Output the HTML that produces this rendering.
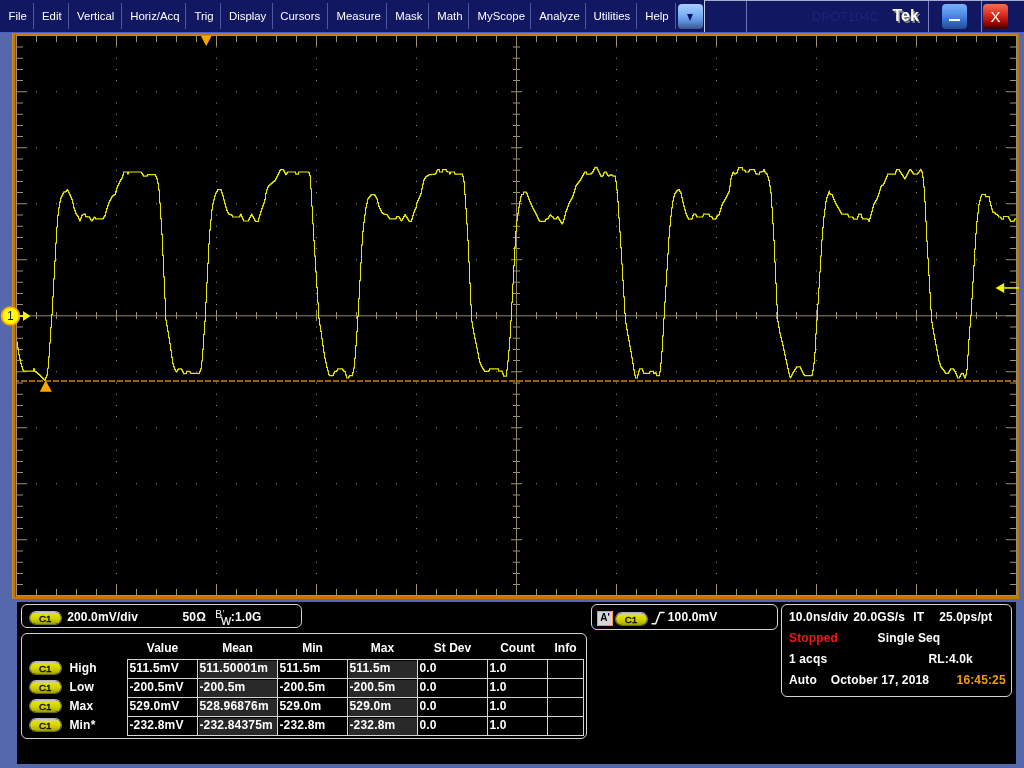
<!DOCTYPE html>
<html lang="en">
<head>
<meta charset="utf-8">
<title>Tek DPO7104C</title>
<style>
html,body{margin:0;padding:0}
body{width:1024px;height:768px;overflow:hidden;position:relative;background:#5568ab;
 font-family:"Liberation Sans",Arial,sans-serif;font-size:12px;color:#fff}
.scope{position:absolute;left:0;top:0}
#menubar{will-change:transform;position:absolute;left:0;top:0;width:1024px;height:32px;background:#111761;border-bottom:1px solid #4562c4}
.mi{position:absolute;top:9px;height:15px;line-height:15px;font-size:11.4px;white-space:nowrap;color:#fff;text-align:center}
.sep{position:absolute;top:3px;width:1px;height:26px;background:#4c5aa0}
#more{position:absolute;left:678px;top:4px;width:25px;height:25px;border-radius:4px;
 background:linear-gradient(#a8cdff 0%,#7db2f6 42%,#5d8edb 70%,#3a568a 100%)}
#more:after{content:"";position:absolute;left:9.4px;top:10px;border:3.2px solid transparent;border-top:7px solid #0c1268;border-bottom:none}
#titlebox{position:absolute;left:704px;top:0;width:320px;height:32px;border-left:1px solid #c9cbe6;border-top:1px solid #a6a9d2;box-sizing:border-box}
.vs{position:absolute;top:1px;width:1px;height:31px;background:#7d84bd}
#model{position:absolute;left:812px;top:9px;font-size:13.1px;line-height:16px;color:#1d2572}
#tek{position:absolute;left:892.5px;top:6px;font-size:16px;line-height:20px;font-weight:bold;color:#fff;text-shadow:1.5px 1.5px 0 #8f8978}
#minb{position:absolute;left:942px;top:4px;width:25px;height:25px;border-radius:4px;background:linear-gradient(#78b0fa 0%,#4f8be6 45%,#3266c0 75%,#234a93 100%)}
#minb:after{content:"";position:absolute;left:7px;top:15px;width:11px;height:2px;background:#fff}
#clsb{position:absolute;left:983px;top:4px;width:25px;height:25px;border-radius:4px;background:linear-gradient(#f07058 0%,#e03020 40%,#a00800 75%,#3a0000 100%);
 color:#fff;font-size:15px;line-height:26px;text-align:center}
#panel{position:absolute;left:16.5px;top:601.5px;width:999.7px;height:162.5px;background:#000}
.box{will-change:transform;position:absolute;box-sizing:border-box;border:1px solid #d4d4d4;border-radius:6px}
.b{position:absolute;font-weight:bold;font-size:12px;line-height:14px;white-space:nowrap;color:#fff;letter-spacing:.14px}
.pill{position:absolute;width:33px;height:14px;box-sizing:border-box;border-radius:7px;border:1px solid;border-color:#b4b4bc #77776a #6a6a14 #77776a;background:linear-gradient(#bcbcc4 0%,#cacace 9%,#e2e200 20%,#d6d600 50%,#bcbc00 78%,#9c9c00 100%) padding-box;color:#0a0a00;font-size:9.8px;line-height:14.4px;text-align:center;font-weight:normal;-webkit-text-stroke:.4px #0a0a00;letter-spacing:0;text-indent:-1.2px}
.th{position:absolute;top:7px;margin-left:-1px;height:14px;line-height:14px;text-align:center;font-weight:bold;white-space:nowrap}
.rl{position:absolute;height:19px;line-height:15px;letter-spacing:.2px;font-weight:bold;white-space:nowrap;margin-top:1px}
.td{position:absolute;height:18px;line-height:15px;letter-spacing:.2px;margin:1px 0 0 1px;padding-left:.4px;box-sizing:border-box;font-weight:bold;white-space:nowrap;overflow:hidden}
.td.g{background:#292929}
.ln{position:absolute;background:#d4d4d4}
</style>
</head>
<body>
<div id="menubar">
<span class="mi" style="left:8.5px;width:18.50px">File</span>
<span class="mi" style="left:42px;width:19.25px">Edit</span>
<span class="mi" style="left:77px;width:36.75px">Vertical</span>
<span class="mi" style="left:130.25px;width:49.25px">Horiz/Acq</span>
<span class="mi" style="left:194.5px;width:18.00px">Trig</span>
<span class="mi" style="left:228.5px;width:38.25px">Display</span>
<span class="mi" style="left:280.25px;width:40.00px">Cursors</span>
<span class="mi" style="left:336.5px;width:42.50px">Measure</span>
<span class="mi" style="left:395.25px;width:26.25px">Mask</span>
<span class="mi" style="left:437.25px;width:23.75px">Math</span>
<span class="mi" style="left:477.5px;width:47.50px">MyScope</span>
<span class="mi" style="left:539.25px;width:40.00px">Analyze</span>
<span class="mi" style="left:593.25px;width:37.25px">Utilities</span>
<span class="mi" style="left:645.25px;width:22.75px">Help</span>
<i class="sep" style="left:33px"></i>
<i class="sep" style="left:68px"></i>
<i class="sep" style="left:121px"></i>
<i class="sep" style="left:185px"></i>
<i class="sep" style="left:220px"></i>
<i class="sep" style="left:272px"></i>
<i class="sep" style="left:327px"></i>
<i class="sep" style="left:386px"></i>
<i class="sep" style="left:428px"></i>
<i class="sep" style="left:468px"></i>
<i class="sep" style="left:530px"></i>
<i class="sep" style="left:585px"></i>
<i class="sep" style="left:636px"></i>
<i class="sep" style="left:675px"></i>
<div id="more"></div>
<div id="titlebox"></div>
<i class="vs" style="left:746px;background:#6a72b0"></i><i class="vs" style="left:928px"></i><i class="vs" style="left:981px"></i>
<div id="model">DPO7104C</div>
<div id="tek">Tek</div>
<div id="minb"></div>
<div id="clsb">X</div>
</div>
<svg class="scope" width="1024" height="768" viewBox="0 0 1024 768" shape-rendering="crispEdges"><rect x="12" y="33" width="1007" height="566" fill="#c47600"/>
<rect x="15" y="35" width="1" height="562" fill="#87500a"/>
<rect x="12" y="33" width="1" height="566" fill="#c48a3a"/>
<rect x="16" y="35" width="1001" height="561" fill="#9e9274"/>
<rect x="17" y="36" width="999" height="559" fill="#000"/>
<path d="M36 36h1v6h-1zM36 589h1v6h-1zM36 312.30h1v7h-1zM56 36h1v6h-1zM56 589h1v6h-1zM56 312.30h1v7h-1zM76 36h1v6h-1zM76 589h1v6h-1zM76 312.30h1v7h-1zM96 36h1v6h-1zM96 589h1v6h-1zM96 312.30h1v7h-1zM116 36h1v10h-1zM116 585h1v10h-1zM116 310.30h1v11h-1zM136 36h1v6h-1zM136 589h1v6h-1zM136 312.30h1v7h-1zM156 36h1v6h-1zM156 589h1v6h-1zM156 312.30h1v7h-1zM176 36h1v6h-1zM176 589h1v6h-1zM176 312.30h1v7h-1zM196 36h1v6h-1zM196 589h1v6h-1zM196 312.30h1v7h-1zM216 36h1v10h-1zM216 585h1v10h-1zM216 310.30h1v11h-1zM236 36h1v6h-1zM236 589h1v6h-1zM236 312.30h1v7h-1zM256 36h1v6h-1zM256 589h1v6h-1zM256 312.30h1v7h-1zM276 36h1v6h-1zM276 589h1v6h-1zM276 312.30h1v7h-1zM296 36h1v6h-1zM296 589h1v6h-1zM296 312.30h1v7h-1zM316 36h1v10h-1zM316 585h1v10h-1zM316 310.30h1v11h-1zM336 36h1v6h-1zM336 589h1v6h-1zM336 312.30h1v7h-1zM356 36h1v6h-1zM356 589h1v6h-1zM356 312.30h1v7h-1zM376 36h1v6h-1zM376 589h1v6h-1zM376 312.30h1v7h-1zM396 36h1v6h-1zM396 589h1v6h-1zM396 312.30h1v7h-1zM416 36h1v10h-1zM416 585h1v10h-1zM416 310.30h1v11h-1zM436 36h1v6h-1zM436 589h1v6h-1zM436 312.30h1v7h-1zM456 36h1v6h-1zM456 589h1v6h-1zM456 312.30h1v7h-1zM476 36h1v6h-1zM476 589h1v6h-1zM476 312.30h1v7h-1zM496 36h1v6h-1zM496 589h1v6h-1zM496 312.30h1v7h-1zM516 36h1v10h-1zM516 585h1v10h-1zM536 36h1v6h-1zM536 589h1v6h-1zM536 312.30h1v7h-1zM556 36h1v6h-1zM556 589h1v6h-1zM556 312.30h1v7h-1zM576 36h1v6h-1zM576 589h1v6h-1zM576 312.30h1v7h-1zM596 36h1v6h-1zM596 589h1v6h-1zM596 312.30h1v7h-1zM616 36h1v10h-1zM616 585h1v10h-1zM616 310.30h1v11h-1zM636 36h1v6h-1zM636 589h1v6h-1zM636 312.30h1v7h-1zM656 36h1v6h-1zM656 589h1v6h-1zM656 312.30h1v7h-1zM676 36h1v6h-1zM676 589h1v6h-1zM676 312.30h1v7h-1zM696 36h1v6h-1zM696 589h1v6h-1zM696 312.30h1v7h-1zM716 36h1v10h-1zM716 585h1v10h-1zM716 310.30h1v11h-1zM736 36h1v6h-1zM736 589h1v6h-1zM736 312.30h1v7h-1zM756 36h1v6h-1zM756 589h1v6h-1zM756 312.30h1v7h-1zM776 36h1v6h-1zM776 589h1v6h-1zM776 312.30h1v7h-1zM796 36h1v6h-1zM796 589h1v6h-1zM796 312.30h1v7h-1zM816 36h1v10h-1zM816 585h1v10h-1zM816 310.30h1v11h-1zM836 36h1v6h-1zM836 589h1v6h-1zM836 312.30h1v7h-1zM856 36h1v6h-1zM856 589h1v6h-1zM856 312.30h1v7h-1zM876 36h1v6h-1zM876 589h1v6h-1zM876 312.30h1v7h-1zM896 36h1v6h-1zM896 589h1v6h-1zM896 312.30h1v7h-1zM916 36h1v10h-1zM916 585h1v10h-1zM916 310.30h1v11h-1zM936 36h1v6h-1zM936 589h1v6h-1zM936 312.30h1v7h-1zM956 36h1v6h-1zM956 589h1v6h-1zM956 312.30h1v7h-1zM976 36h1v6h-1zM976 589h1v6h-1zM976 312.30h1v7h-1zM996 36h1v6h-1zM996 589h1v6h-1zM996 312.30h1v7h-1z" fill="#9e9274"/>
<path d="M17 46.50h6v1h-6zM1010 46.50h6v1h-6zM513 46.50h7v1h-7zM17 57.70h6v1h-6zM1010 57.70h6v1h-6zM513 57.70h7v1h-7zM17 68.90h6v1h-6zM1010 68.90h6v1h-6zM513 68.90h7v1h-7zM17 80.10h6v1h-6zM1010 80.10h6v1h-6zM513 80.10h7v1h-7zM17 91.30h10v1h-10zM1006 91.30h10v1h-10zM511 91.30h11v1h-11zM17 102.50h6v1h-6zM1010 102.50h6v1h-6zM513 102.50h7v1h-7zM17 113.70h6v1h-6zM1010 113.70h6v1h-6zM513 113.70h7v1h-7zM17 124.90h6v1h-6zM1010 124.90h6v1h-6zM513 124.90h7v1h-7zM17 136.10h6v1h-6zM1010 136.10h6v1h-6zM513 136.10h7v1h-7zM17 147.30h10v1h-10zM1006 147.30h10v1h-10zM511 147.30h11v1h-11zM17 158.50h6v1h-6zM1010 158.50h6v1h-6zM513 158.50h7v1h-7zM17 169.70h6v1h-6zM1010 169.70h6v1h-6zM513 169.70h7v1h-7zM17 180.90h6v1h-6zM1010 180.90h6v1h-6zM513 180.90h7v1h-7zM17 192.10h6v1h-6zM1010 192.10h6v1h-6zM513 192.10h7v1h-7zM17 203.30h10v1h-10zM1006 203.30h10v1h-10zM511 203.30h11v1h-11zM17 214.50h6v1h-6zM1010 214.50h6v1h-6zM513 214.50h7v1h-7zM17 225.70h6v1h-6zM1010 225.70h6v1h-6zM513 225.70h7v1h-7zM17 236.90h6v1h-6zM1010 236.90h6v1h-6zM513 236.90h7v1h-7zM17 248.10h6v1h-6zM1010 248.10h6v1h-6zM513 248.10h7v1h-7zM17 259.30h10v1h-10zM1006 259.30h10v1h-10zM511 259.30h11v1h-11zM17 270.50h6v1h-6zM1010 270.50h6v1h-6zM513 270.50h7v1h-7zM17 281.70h6v1h-6zM1010 281.70h6v1h-6zM513 281.70h7v1h-7zM17 292.90h6v1h-6zM1010 292.90h6v1h-6zM513 292.90h7v1h-7zM17 304.10h6v1h-6zM1010 304.10h6v1h-6zM513 304.10h7v1h-7zM17 315.30h10v1h-10zM1006 315.30h10v1h-10zM17 326.50h6v1h-6zM1010 326.50h6v1h-6zM513 326.50h7v1h-7zM17 337.70h6v1h-6zM1010 337.70h6v1h-6zM513 337.70h7v1h-7zM17 348.90h6v1h-6zM1010 348.90h6v1h-6zM513 348.90h7v1h-7zM17 360.10h6v1h-6zM1010 360.10h6v1h-6zM513 360.10h7v1h-7zM17 371.30h10v1h-10zM1006 371.30h10v1h-10zM511 371.30h11v1h-11zM17 382.50h6v1h-6zM1010 382.50h6v1h-6zM513 382.50h7v1h-7zM17 393.70h6v1h-6zM1010 393.70h6v1h-6zM513 393.70h7v1h-7zM17 404.90h6v1h-6zM1010 404.90h6v1h-6zM513 404.90h7v1h-7zM17 416.10h6v1h-6zM1010 416.10h6v1h-6zM513 416.10h7v1h-7zM17 427.30h10v1h-10zM1006 427.30h10v1h-10zM511 427.30h11v1h-11zM17 438.50h6v1h-6zM1010 438.50h6v1h-6zM513 438.50h7v1h-7zM17 449.70h6v1h-6zM1010 449.70h6v1h-6zM513 449.70h7v1h-7zM17 460.90h6v1h-6zM1010 460.90h6v1h-6zM513 460.90h7v1h-7zM17 472.10h6v1h-6zM1010 472.10h6v1h-6zM513 472.10h7v1h-7zM17 483.30h10v1h-10zM1006 483.30h10v1h-10zM511 483.30h11v1h-11zM17 494.50h6v1h-6zM1010 494.50h6v1h-6zM513 494.50h7v1h-7zM17 505.70h6v1h-6zM1010 505.70h6v1h-6zM513 505.70h7v1h-7zM17 516.90h6v1h-6zM1010 516.90h6v1h-6zM513 516.90h7v1h-7zM17 528.10h6v1h-6zM1010 528.10h6v1h-6zM513 528.10h7v1h-7zM17 539.30h10v1h-10zM1006 539.30h10v1h-10zM511 539.30h11v1h-11zM17 550.50h6v1h-6zM1010 550.50h6v1h-6zM513 550.50h7v1h-7zM17 561.70h6v1h-6zM1010 561.70h6v1h-6zM513 561.70h7v1h-7zM17 572.90h6v1h-6zM1010 572.90h6v1h-6zM513 572.90h7v1h-7zM17 584.10h6v1h-6zM1010 584.10h6v1h-6zM513 584.10h7v1h-7zM36 91.30h1v1h-1zM36 147.30h1v1h-1zM36 203.30h1v1h-1zM36 259.30h1v1h-1zM36 371.30h1v1h-1zM36 427.30h1v1h-1zM36 483.30h1v1h-1zM36 539.30h1v1h-1zM56 91.30h1v1h-1zM56 147.30h1v1h-1zM56 203.30h1v1h-1zM56 259.30h1v1h-1zM56 371.30h1v1h-1zM56 427.30h1v1h-1zM56 483.30h1v1h-1zM56 539.30h1v1h-1zM76 91.30h1v1h-1zM76 147.30h1v1h-1zM76 203.30h1v1h-1zM76 259.30h1v1h-1zM76 371.30h1v1h-1zM76 427.30h1v1h-1zM76 483.30h1v1h-1zM76 539.30h1v1h-1zM96 91.30h1v1h-1zM96 147.30h1v1h-1zM96 203.30h1v1h-1zM96 259.30h1v1h-1zM96 371.30h1v1h-1zM96 427.30h1v1h-1zM96 483.30h1v1h-1zM96 539.30h1v1h-1zM116 46.50h1v1h-1zM116 57.70h1v1h-1zM116 68.90h1v1h-1zM116 80.10h1v1h-1zM116 102.50h1v1h-1zM116 113.70h1v1h-1zM116 124.90h1v1h-1zM116 136.10h1v1h-1zM116 158.50h1v1h-1zM116 169.70h1v1h-1zM116 180.90h1v1h-1zM116 192.10h1v1h-1zM116 214.50h1v1h-1zM116 225.70h1v1h-1zM116 236.90h1v1h-1zM116 248.10h1v1h-1zM116 270.50h1v1h-1zM116 281.70h1v1h-1zM116 292.90h1v1h-1zM116 304.10h1v1h-1zM116 326.50h1v1h-1zM116 337.70h1v1h-1zM116 348.90h1v1h-1zM116 360.10h1v1h-1zM116 382.50h1v1h-1zM116 393.70h1v1h-1zM116 404.90h1v1h-1zM116 416.10h1v1h-1zM116 438.50h1v1h-1zM116 449.70h1v1h-1zM116 460.90h1v1h-1zM116 472.10h1v1h-1zM116 494.50h1v1h-1zM116 505.70h1v1h-1zM116 516.90h1v1h-1zM116 528.10h1v1h-1zM116 550.50h1v1h-1zM116 561.70h1v1h-1zM116 572.90h1v1h-1zM116 584.10h1v1h-1zM136 91.30h1v1h-1zM136 147.30h1v1h-1zM136 203.30h1v1h-1zM136 259.30h1v1h-1zM136 371.30h1v1h-1zM136 427.30h1v1h-1zM136 483.30h1v1h-1zM136 539.30h1v1h-1zM156 91.30h1v1h-1zM156 147.30h1v1h-1zM156 203.30h1v1h-1zM156 259.30h1v1h-1zM156 371.30h1v1h-1zM156 427.30h1v1h-1zM156 483.30h1v1h-1zM156 539.30h1v1h-1zM176 91.30h1v1h-1zM176 147.30h1v1h-1zM176 203.30h1v1h-1zM176 259.30h1v1h-1zM176 371.30h1v1h-1zM176 427.30h1v1h-1zM176 483.30h1v1h-1zM176 539.30h1v1h-1zM196 91.30h1v1h-1zM196 147.30h1v1h-1zM196 203.30h1v1h-1zM196 259.30h1v1h-1zM196 371.30h1v1h-1zM196 427.30h1v1h-1zM196 483.30h1v1h-1zM196 539.30h1v1h-1zM216 46.50h1v1h-1zM216 57.70h1v1h-1zM216 68.90h1v1h-1zM216 80.10h1v1h-1zM216 102.50h1v1h-1zM216 113.70h1v1h-1zM216 124.90h1v1h-1zM216 136.10h1v1h-1zM216 158.50h1v1h-1zM216 169.70h1v1h-1zM216 180.90h1v1h-1zM216 192.10h1v1h-1zM216 214.50h1v1h-1zM216 225.70h1v1h-1zM216 236.90h1v1h-1zM216 248.10h1v1h-1zM216 270.50h1v1h-1zM216 281.70h1v1h-1zM216 292.90h1v1h-1zM216 304.10h1v1h-1zM216 326.50h1v1h-1zM216 337.70h1v1h-1zM216 348.90h1v1h-1zM216 360.10h1v1h-1zM216 382.50h1v1h-1zM216 393.70h1v1h-1zM216 404.90h1v1h-1zM216 416.10h1v1h-1zM216 438.50h1v1h-1zM216 449.70h1v1h-1zM216 460.90h1v1h-1zM216 472.10h1v1h-1zM216 494.50h1v1h-1zM216 505.70h1v1h-1zM216 516.90h1v1h-1zM216 528.10h1v1h-1zM216 550.50h1v1h-1zM216 561.70h1v1h-1zM216 572.90h1v1h-1zM216 584.10h1v1h-1zM236 91.30h1v1h-1zM236 147.30h1v1h-1zM236 203.30h1v1h-1zM236 259.30h1v1h-1zM236 371.30h1v1h-1zM236 427.30h1v1h-1zM236 483.30h1v1h-1zM236 539.30h1v1h-1zM256 91.30h1v1h-1zM256 147.30h1v1h-1zM256 203.30h1v1h-1zM256 259.30h1v1h-1zM256 371.30h1v1h-1zM256 427.30h1v1h-1zM256 483.30h1v1h-1zM256 539.30h1v1h-1zM276 91.30h1v1h-1zM276 147.30h1v1h-1zM276 203.30h1v1h-1zM276 259.30h1v1h-1zM276 371.30h1v1h-1zM276 427.30h1v1h-1zM276 483.30h1v1h-1zM276 539.30h1v1h-1zM296 91.30h1v1h-1zM296 147.30h1v1h-1zM296 203.30h1v1h-1zM296 259.30h1v1h-1zM296 371.30h1v1h-1zM296 427.30h1v1h-1zM296 483.30h1v1h-1zM296 539.30h1v1h-1zM316 46.50h1v1h-1zM316 57.70h1v1h-1zM316 68.90h1v1h-1zM316 80.10h1v1h-1zM316 102.50h1v1h-1zM316 113.70h1v1h-1zM316 124.90h1v1h-1zM316 136.10h1v1h-1zM316 158.50h1v1h-1zM316 169.70h1v1h-1zM316 180.90h1v1h-1zM316 192.10h1v1h-1zM316 214.50h1v1h-1zM316 225.70h1v1h-1zM316 236.90h1v1h-1zM316 248.10h1v1h-1zM316 270.50h1v1h-1zM316 281.70h1v1h-1zM316 292.90h1v1h-1zM316 304.10h1v1h-1zM316 326.50h1v1h-1zM316 337.70h1v1h-1zM316 348.90h1v1h-1zM316 360.10h1v1h-1zM316 382.50h1v1h-1zM316 393.70h1v1h-1zM316 404.90h1v1h-1zM316 416.10h1v1h-1zM316 438.50h1v1h-1zM316 449.70h1v1h-1zM316 460.90h1v1h-1zM316 472.10h1v1h-1zM316 494.50h1v1h-1zM316 505.70h1v1h-1zM316 516.90h1v1h-1zM316 528.10h1v1h-1zM316 550.50h1v1h-1zM316 561.70h1v1h-1zM316 572.90h1v1h-1zM316 584.10h1v1h-1zM336 91.30h1v1h-1zM336 147.30h1v1h-1zM336 203.30h1v1h-1zM336 259.30h1v1h-1zM336 371.30h1v1h-1zM336 427.30h1v1h-1zM336 483.30h1v1h-1zM336 539.30h1v1h-1zM356 91.30h1v1h-1zM356 147.30h1v1h-1zM356 203.30h1v1h-1zM356 259.30h1v1h-1zM356 371.30h1v1h-1zM356 427.30h1v1h-1zM356 483.30h1v1h-1zM356 539.30h1v1h-1zM376 91.30h1v1h-1zM376 147.30h1v1h-1zM376 203.30h1v1h-1zM376 259.30h1v1h-1zM376 371.30h1v1h-1zM376 427.30h1v1h-1zM376 483.30h1v1h-1zM376 539.30h1v1h-1zM396 91.30h1v1h-1zM396 147.30h1v1h-1zM396 203.30h1v1h-1zM396 259.30h1v1h-1zM396 371.30h1v1h-1zM396 427.30h1v1h-1zM396 483.30h1v1h-1zM396 539.30h1v1h-1zM416 46.50h1v1h-1zM416 57.70h1v1h-1zM416 68.90h1v1h-1zM416 80.10h1v1h-1zM416 102.50h1v1h-1zM416 113.70h1v1h-1zM416 124.90h1v1h-1zM416 136.10h1v1h-1zM416 158.50h1v1h-1zM416 169.70h1v1h-1zM416 180.90h1v1h-1zM416 192.10h1v1h-1zM416 214.50h1v1h-1zM416 225.70h1v1h-1zM416 236.90h1v1h-1zM416 248.10h1v1h-1zM416 270.50h1v1h-1zM416 281.70h1v1h-1zM416 292.90h1v1h-1zM416 304.10h1v1h-1zM416 326.50h1v1h-1zM416 337.70h1v1h-1zM416 348.90h1v1h-1zM416 360.10h1v1h-1zM416 382.50h1v1h-1zM416 393.70h1v1h-1zM416 404.90h1v1h-1zM416 416.10h1v1h-1zM416 438.50h1v1h-1zM416 449.70h1v1h-1zM416 460.90h1v1h-1zM416 472.10h1v1h-1zM416 494.50h1v1h-1zM416 505.70h1v1h-1zM416 516.90h1v1h-1zM416 528.10h1v1h-1zM416 550.50h1v1h-1zM416 561.70h1v1h-1zM416 572.90h1v1h-1zM416 584.10h1v1h-1zM436 91.30h1v1h-1zM436 147.30h1v1h-1zM436 203.30h1v1h-1zM436 259.30h1v1h-1zM436 371.30h1v1h-1zM436 427.30h1v1h-1zM436 483.30h1v1h-1zM436 539.30h1v1h-1zM456 91.30h1v1h-1zM456 147.30h1v1h-1zM456 203.30h1v1h-1zM456 259.30h1v1h-1zM456 371.30h1v1h-1zM456 427.30h1v1h-1zM456 483.30h1v1h-1zM456 539.30h1v1h-1zM476 91.30h1v1h-1zM476 147.30h1v1h-1zM476 203.30h1v1h-1zM476 259.30h1v1h-1zM476 371.30h1v1h-1zM476 427.30h1v1h-1zM476 483.30h1v1h-1zM476 539.30h1v1h-1zM496 91.30h1v1h-1zM496 147.30h1v1h-1zM496 203.30h1v1h-1zM496 259.30h1v1h-1zM496 371.30h1v1h-1zM496 427.30h1v1h-1zM496 483.30h1v1h-1zM496 539.30h1v1h-1zM536 91.30h1v1h-1zM536 147.30h1v1h-1zM536 203.30h1v1h-1zM536 259.30h1v1h-1zM536 371.30h1v1h-1zM536 427.30h1v1h-1zM536 483.30h1v1h-1zM536 539.30h1v1h-1zM556 91.30h1v1h-1zM556 147.30h1v1h-1zM556 203.30h1v1h-1zM556 259.30h1v1h-1zM556 371.30h1v1h-1zM556 427.30h1v1h-1zM556 483.30h1v1h-1zM556 539.30h1v1h-1zM576 91.30h1v1h-1zM576 147.30h1v1h-1zM576 203.30h1v1h-1zM576 259.30h1v1h-1zM576 371.30h1v1h-1zM576 427.30h1v1h-1zM576 483.30h1v1h-1zM576 539.30h1v1h-1zM596 91.30h1v1h-1zM596 147.30h1v1h-1zM596 203.30h1v1h-1zM596 259.30h1v1h-1zM596 371.30h1v1h-1zM596 427.30h1v1h-1zM596 483.30h1v1h-1zM596 539.30h1v1h-1zM616 46.50h1v1h-1zM616 57.70h1v1h-1zM616 68.90h1v1h-1zM616 80.10h1v1h-1zM616 102.50h1v1h-1zM616 113.70h1v1h-1zM616 124.90h1v1h-1zM616 136.10h1v1h-1zM616 158.50h1v1h-1zM616 169.70h1v1h-1zM616 180.90h1v1h-1zM616 192.10h1v1h-1zM616 214.50h1v1h-1zM616 225.70h1v1h-1zM616 236.90h1v1h-1zM616 248.10h1v1h-1zM616 270.50h1v1h-1zM616 281.70h1v1h-1zM616 292.90h1v1h-1zM616 304.10h1v1h-1zM616 326.50h1v1h-1zM616 337.70h1v1h-1zM616 348.90h1v1h-1zM616 360.10h1v1h-1zM616 382.50h1v1h-1zM616 393.70h1v1h-1zM616 404.90h1v1h-1zM616 416.10h1v1h-1zM616 438.50h1v1h-1zM616 449.70h1v1h-1zM616 460.90h1v1h-1zM616 472.10h1v1h-1zM616 494.50h1v1h-1zM616 505.70h1v1h-1zM616 516.90h1v1h-1zM616 528.10h1v1h-1zM616 550.50h1v1h-1zM616 561.70h1v1h-1zM616 572.90h1v1h-1zM616 584.10h1v1h-1zM636 91.30h1v1h-1zM636 147.30h1v1h-1zM636 203.30h1v1h-1zM636 259.30h1v1h-1zM636 371.30h1v1h-1zM636 427.30h1v1h-1zM636 483.30h1v1h-1zM636 539.30h1v1h-1zM656 91.30h1v1h-1zM656 147.30h1v1h-1zM656 203.30h1v1h-1zM656 259.30h1v1h-1zM656 371.30h1v1h-1zM656 427.30h1v1h-1zM656 483.30h1v1h-1zM656 539.30h1v1h-1zM676 91.30h1v1h-1zM676 147.30h1v1h-1zM676 203.30h1v1h-1zM676 259.30h1v1h-1zM676 371.30h1v1h-1zM676 427.30h1v1h-1zM676 483.30h1v1h-1zM676 539.30h1v1h-1zM696 91.30h1v1h-1zM696 147.30h1v1h-1zM696 203.30h1v1h-1zM696 259.30h1v1h-1zM696 371.30h1v1h-1zM696 427.30h1v1h-1zM696 483.30h1v1h-1zM696 539.30h1v1h-1zM716 46.50h1v1h-1zM716 57.70h1v1h-1zM716 68.90h1v1h-1zM716 80.10h1v1h-1zM716 102.50h1v1h-1zM716 113.70h1v1h-1zM716 124.90h1v1h-1zM716 136.10h1v1h-1zM716 158.50h1v1h-1zM716 169.70h1v1h-1zM716 180.90h1v1h-1zM716 192.10h1v1h-1zM716 214.50h1v1h-1zM716 225.70h1v1h-1zM716 236.90h1v1h-1zM716 248.10h1v1h-1zM716 270.50h1v1h-1zM716 281.70h1v1h-1zM716 292.90h1v1h-1zM716 304.10h1v1h-1zM716 326.50h1v1h-1zM716 337.70h1v1h-1zM716 348.90h1v1h-1zM716 360.10h1v1h-1zM716 382.50h1v1h-1zM716 393.70h1v1h-1zM716 404.90h1v1h-1zM716 416.10h1v1h-1zM716 438.50h1v1h-1zM716 449.70h1v1h-1zM716 460.90h1v1h-1zM716 472.10h1v1h-1zM716 494.50h1v1h-1zM716 505.70h1v1h-1zM716 516.90h1v1h-1zM716 528.10h1v1h-1zM716 550.50h1v1h-1zM716 561.70h1v1h-1zM716 572.90h1v1h-1zM716 584.10h1v1h-1zM736 91.30h1v1h-1zM736 147.30h1v1h-1zM736 203.30h1v1h-1zM736 259.30h1v1h-1zM736 371.30h1v1h-1zM736 427.30h1v1h-1zM736 483.30h1v1h-1zM736 539.30h1v1h-1zM756 91.30h1v1h-1zM756 147.30h1v1h-1zM756 203.30h1v1h-1zM756 259.30h1v1h-1zM756 371.30h1v1h-1zM756 427.30h1v1h-1zM756 483.30h1v1h-1zM756 539.30h1v1h-1zM776 91.30h1v1h-1zM776 147.30h1v1h-1zM776 203.30h1v1h-1zM776 259.30h1v1h-1zM776 371.30h1v1h-1zM776 427.30h1v1h-1zM776 483.30h1v1h-1zM776 539.30h1v1h-1zM796 91.30h1v1h-1zM796 147.30h1v1h-1zM796 203.30h1v1h-1zM796 259.30h1v1h-1zM796 371.30h1v1h-1zM796 427.30h1v1h-1zM796 483.30h1v1h-1zM796 539.30h1v1h-1zM816 46.50h1v1h-1zM816 57.70h1v1h-1zM816 68.90h1v1h-1zM816 80.10h1v1h-1zM816 102.50h1v1h-1zM816 113.70h1v1h-1zM816 124.90h1v1h-1zM816 136.10h1v1h-1zM816 158.50h1v1h-1zM816 169.70h1v1h-1zM816 180.90h1v1h-1zM816 192.10h1v1h-1zM816 214.50h1v1h-1zM816 225.70h1v1h-1zM816 236.90h1v1h-1zM816 248.10h1v1h-1zM816 270.50h1v1h-1zM816 281.70h1v1h-1zM816 292.90h1v1h-1zM816 304.10h1v1h-1zM816 326.50h1v1h-1zM816 337.70h1v1h-1zM816 348.90h1v1h-1zM816 360.10h1v1h-1zM816 382.50h1v1h-1zM816 393.70h1v1h-1zM816 404.90h1v1h-1zM816 416.10h1v1h-1zM816 438.50h1v1h-1zM816 449.70h1v1h-1zM816 460.90h1v1h-1zM816 472.10h1v1h-1zM816 494.50h1v1h-1zM816 505.70h1v1h-1zM816 516.90h1v1h-1zM816 528.10h1v1h-1zM816 550.50h1v1h-1zM816 561.70h1v1h-1zM816 572.90h1v1h-1zM816 584.10h1v1h-1zM836 91.30h1v1h-1zM836 147.30h1v1h-1zM836 203.30h1v1h-1zM836 259.30h1v1h-1zM836 371.30h1v1h-1zM836 427.30h1v1h-1zM836 483.30h1v1h-1zM836 539.30h1v1h-1zM856 91.30h1v1h-1zM856 147.30h1v1h-1zM856 203.30h1v1h-1zM856 259.30h1v1h-1zM856 371.30h1v1h-1zM856 427.30h1v1h-1zM856 483.30h1v1h-1zM856 539.30h1v1h-1zM876 91.30h1v1h-1zM876 147.30h1v1h-1zM876 203.30h1v1h-1zM876 259.30h1v1h-1zM876 371.30h1v1h-1zM876 427.30h1v1h-1zM876 483.30h1v1h-1zM876 539.30h1v1h-1zM896 91.30h1v1h-1zM896 147.30h1v1h-1zM896 203.30h1v1h-1zM896 259.30h1v1h-1zM896 371.30h1v1h-1zM896 427.30h1v1h-1zM896 483.30h1v1h-1zM896 539.30h1v1h-1zM916 46.50h1v1h-1zM916 57.70h1v1h-1zM916 68.90h1v1h-1zM916 80.10h1v1h-1zM916 102.50h1v1h-1zM916 113.70h1v1h-1zM916 124.90h1v1h-1zM916 136.10h1v1h-1zM916 158.50h1v1h-1zM916 169.70h1v1h-1zM916 180.90h1v1h-1zM916 192.10h1v1h-1zM916 214.50h1v1h-1zM916 225.70h1v1h-1zM916 236.90h1v1h-1zM916 248.10h1v1h-1zM916 270.50h1v1h-1zM916 281.70h1v1h-1zM916 292.90h1v1h-1zM916 304.10h1v1h-1zM916 326.50h1v1h-1zM916 337.70h1v1h-1zM916 348.90h1v1h-1zM916 360.10h1v1h-1zM916 382.50h1v1h-1zM916 393.70h1v1h-1zM916 404.90h1v1h-1zM916 416.10h1v1h-1zM916 438.50h1v1h-1zM916 449.70h1v1h-1zM916 460.90h1v1h-1zM916 472.10h1v1h-1zM916 494.50h1v1h-1zM916 505.70h1v1h-1zM916 516.90h1v1h-1zM916 528.10h1v1h-1zM916 550.50h1v1h-1zM916 561.70h1v1h-1zM916 572.90h1v1h-1zM916 584.10h1v1h-1zM936 91.30h1v1h-1zM936 147.30h1v1h-1zM936 203.30h1v1h-1zM936 259.30h1v1h-1zM936 371.30h1v1h-1zM936 427.30h1v1h-1zM936 483.30h1v1h-1zM936 539.30h1v1h-1zM956 91.30h1v1h-1zM956 147.30h1v1h-1zM956 203.30h1v1h-1zM956 259.30h1v1h-1zM956 371.30h1v1h-1zM956 427.30h1v1h-1zM956 483.30h1v1h-1zM956 539.30h1v1h-1zM976 91.30h1v1h-1zM976 147.30h1v1h-1zM976 203.30h1v1h-1zM976 259.30h1v1h-1zM976 371.30h1v1h-1zM976 427.30h1v1h-1zM976 483.30h1v1h-1zM976 539.30h1v1h-1zM996 91.30h1v1h-1zM996 147.30h1v1h-1zM996 203.30h1v1h-1zM996 259.30h1v1h-1zM996 371.30h1v1h-1zM996 427.30h1v1h-1zM996 483.30h1v1h-1zM996 539.30h1v1h-1z" fill="#9e9274" shape-rendering="geometricPrecision"/>
<rect x="17" y="315.30" width="999" height="1" fill="#8f866a" shape-rendering="geometricPrecision"/>
<rect x="516" y="36" width="1" height="559" fill="#8f866a"/>
<path d="M17 381H1016" stroke="#9e5f00" stroke-width="2" stroke-dasharray="6 2" stroke-dashoffset="4"/>
<path d="M17 341.38h1v7.35h-1zM18 347.49h1v7.77h-1zM19 354.02h1v5.64h-1zM20 358.42h1v5.53h-1zM21 362.71h1v4.52h-1zM22 365.99h1v4.52h-1zM23 369.27h1v2.55h-1zM24 370.58h1v1.24h-1zM25 370.58h1v1.24h-1zM26 370.58h1v1.24h-1zM27 370.58h1v1.24h-1zM28 370.58h1v1.24h-1zM29 370.58h1v1.24h-1zM30 370.58h1v1.24h-1zM31 370.58h1v1.24h-1zM32 370.58h1v1.24h-1zM33 368.18h1v3.64h-1zM34 368.18h1v3.71h-1zM35 370.65h1v1.92h-1zM36 371.33h1v1.92h-1zM37 372.01h1v2.13h-1zM38 372.90h1v2.15h-1zM39 373.81h1v2.15h-1zM40 374.72h1v2.20h-1zM41 375.68h1v2.24h-1zM42 376.68h1v2.24h-1zM43 377.68h1v2.24h-1zM44 378.68h1v2.14h-1zM45 377.10h1v3.49h-1zM46 374.40h1v3.94h-1zM47 367.63h1v8.01h-1zM48 356.22h1v12.65h-1zM49 342.18h1v15.28h-1zM50 327.00h1v16.42h-1zM51 314.02h1v14.22h-1zM52 296.15h1v19.11h-1zM53 278.27h1v19.11h-1zM54 260.40h1v19.11h-1zM55 242.53h1v19.11h-1zM56 226.63h1v17.14h-1zM57 214.84h1v13.03h-1zM58 207.22h1v8.85h-1zM59 201.46h1v7.00h-1zM60 197.18h1v5.52h-1zM61 195.22h1v3.21h-1zM62 193.25h1v3.21h-1zM63 191.46h1v3.03h-1zM64 191.25h1v1.45h-1zM65 190.82h1v1.67h-1zM66 189.50h1v2.55h-1zM67 188.98h1v2.39h-1zM68 190.13h1v3.24h-1zM69 192.14h1v3.43h-1zM70 194.33h1v3.43h-1zM71 196.53h1v3.43h-1zM72 198.72h1v5.11h-1zM73 202.59h1v5.83h-1zM74 207.18h1v4.06h-1zM75 210.00h1v4.06h-1zM76 212.82h1v2.86h-1zM77 214.43h1v2.56h-1zM78 215.75h1v3.62h-1zM79 218.13h1v3.49h-1zM80 217.56h1v3.80h-1zM81 215.00h1v3.80h-1zM82 213.89h1v2.36h-1zM83 213.73h1v1.39h-1zM84 213.58h1v1.39h-1zM85 213.58h1v3.56h-1zM86 215.90h1v1.39h-1zM87 216.05h1v1.39h-1zM88 216.20h1v1.39h-1zM89 216.35h1v2.50h-1zM90 217.61h1v2.78h-1zM91 219.15h1v2.47h-1zM92 218.72h1v2.62h-1zM93 217.35h1v2.62h-1zM94 216.38h1v2.21h-1zM95 216.95h1v2.57h-1zM96 218.28h1v1.24h-1zM97 218.28h1v1.24h-1zM98 218.28h1v1.24h-1zM99 218.28h1v1.24h-1zM100 218.28h1v1.24h-1zM101 218.28h1v1.24h-1zM102 218.12h1v1.40h-1zM103 216.55h1v2.81h-1zM104 214.98h1v2.81h-1zM105 211.48h1v4.74h-1zM106 207.98h1v4.74h-1zM107 204.99h1v4.23h-1zM108 202.34h1v3.89h-1zM109 200.10h1v3.48h-1zM110 198.14h1v3.20h-1zM111 196.18h1v3.20h-1zM112 195.25h1v2.16h-1zM113 194.45h1v2.05h-1zM114 193.64h1v2.05h-1zM115 190.74h1v4.14h-1zM116 187.31h1v4.67h-1zM117 184.97h1v3.59h-1zM118 182.89h1v3.32h-1zM119 180.82h1v3.32h-1zM120 179.02h1v3.04h-1zM121 177.49h1v2.77h-1zM122 174.52h1v4.21h-1zM123 171.38h1v4.38h-1zM124 171.38h1v1.24h-1zM125 171.38h1v1.24h-1zM126 171.38h1v1.24h-1zM127 171.38h1v3.24h-1zM128 171.38h1v2.99h-1zM129 171.38h1v1.24h-1zM130 171.38h1v1.24h-1zM131 171.38h1v1.24h-1zM132 171.38h1v1.24h-1zM133 171.38h1v1.24h-1zM134 171.38h1v1.24h-1zM135 171.38h1v1.24h-1zM136 171.38h1v1.24h-1zM137 171.38h1v1.24h-1zM138 171.38h1v1.24h-1zM139 171.38h1v1.24h-1zM140 171.38h1v1.24h-1zM141 171.38h1v2.65h-1zM142 172.79h1v2.65h-1zM143 174.21h1v2.51h-1zM144 175.48h1v1.24h-1zM145 175.48h1v1.24h-1zM146 175.31h1v1.41h-1zM147 173.98h1v2.57h-1zM148 173.98h1v1.24h-1zM149 173.98h1v1.24h-1zM150 173.98h1v1.24h-1zM151 173.98h1v1.24h-1zM152 173.98h1v1.24h-1zM153 173.98h1v1.24h-1zM154 173.98h1v1.24h-1zM155 173.98h1v3.01h-1zM156 175.75h1v3.76h-1zM157 178.27h1v5.45h-1zM158 182.48h1v7.99h-1zM159 189.23h1v14.59h-1zM160 202.58h1v16.65h-1zM161 217.99h1v17.05h-1zM162 233.80h1v22.21h-1zM163 254.76h1v22.78h-1zM164 276.30h1v22.78h-1zM165 297.84h1v22.78h-1zM166 319.38h1v6.81h-1zM167 324.95h1v7.11h-1zM168 330.82h1v7.31h-1zM169 336.89h1v7.31h-1zM170 342.96h1v7.99h-1zM171 349.71h1v8.28h-1zM172 356.75h1v7.52h-1zM173 363.02h1v4.46h-1zM174 366.25h1v3.80h-1zM175 368.81h1v2.82h-1zM176 370.39h1v2.03h-1zM177 368.93h1v2.74h-1zM178 368.18h1v1.99h-1zM179 368.18h1v1.24h-1zM180 368.18h1v1.24h-1zM181 368.18h1v2.37h-1zM182 369.31h1v3.12h-1zM183 371.18h1v3.14h-1zM184 373.08h1v1.24h-1zM185 372.85h1v1.47h-1zM186 370.78h1v3.31h-1zM187 370.78h1v1.24h-1zM188 370.78h1v1.24h-1zM189 370.78h1v1.62h-1zM190 371.16h1v2.76h-1zM191 372.68h1v1.24h-1zM192 372.68h1v1.24h-1zM193 372.68h1v1.24h-1zM194 372.68h1v1.24h-1zM195 372.68h1v1.24h-1zM196 372.68h1v1.24h-1zM197 372.68h1v1.24h-1zM198 372.68h1v1.24h-1zM199 370.68h1v3.24h-1zM200 368.18h1v3.74h-1zM201 360.38h1v9.04h-1zM202 348.80h1v12.82h-1zM203 333.68h1v16.36h-1zM204 320.68h1v14.24h-1zM205 301.80h1v20.12h-1zM206 282.26h1v20.77h-1zM207 262.73h1v20.77h-1zM208 243.19h1v20.77h-1zM209 229.34h1v15.10h-1zM210 219.27h1v11.31h-1zM211 209.20h1v11.31h-1zM212 203.33h1v7.11h-1zM213 199.26h1v5.31h-1zM214 195.19h1v5.31h-1zM215 192.48h1v3.95h-1zM216 190.73h1v2.99h-1zM217 188.98h1v2.99h-1zM218 188.98h1v1.24h-1zM219 188.98h1v1.24h-1zM220 188.98h1v1.53h-1zM221 189.27h1v4.13h-1zM222 192.16h1v4.34h-1zM223 195.26h1v5.14h-1zM224 199.16h1v5.08h-1zM225 203.00h1v4.82h-1zM226 206.57h1v4.42h-1zM227 209.75h1v3.49h-1zM228 212.00h1v2.86h-1zM229 213.62h1v1.38h-1zM230 213.76h1v1.38h-1zM231 213.90h1v2.01h-1zM232 214.67h1v2.95h-1zM233 216.38h1v1.24h-1zM234 216.38h1v1.24h-1zM235 216.38h1v1.24h-1zM236 216.38h1v1.24h-1zM237 216.38h1v1.24h-1zM238 216.38h1v1.24h-1zM239 215.18h1v2.44h-1zM240 213.58h1v2.84h-1zM241 214.02h1v3.43h-1zM242 216.21h1v3.43h-1zM243 218.41h1v3.21h-1zM244 220.38h1v1.24h-1zM245 220.38h1v1.24h-1zM246 220.38h1v1.24h-1zM247 220.38h1v1.24h-1zM248 218.83h1v2.79h-1zM249 216.88h1v3.18h-1zM250 214.94h1v3.18h-1zM251 213.58h1v2.60h-1zM252 214.13h1v3.09h-1zM253 215.98h1v3.09h-1zM254 217.83h1v3.09h-1zM255 219.67h1v2.35h-1zM256 220.78h1v1.24h-1zM257 220.78h1v1.24h-1zM258 217.54h1v4.48h-1zM259 214.30h1v4.48h-1zM260 211.05h1v4.48h-1zM261 208.12h1v4.17h-1zM262 205.32h1v4.04h-1zM263 202.52h1v4.04h-1zM264 199.02h1v4.74h-1zM265 192.74h1v7.53h-1zM266 189.27h1v4.71h-1zM267 186.51h1v4.00h-1zM268 185.06h1v2.69h-1zM269 184.18h1v2.12h-1zM270 183.30h1v2.12h-1zM271 182.43h1v2.11h-1zM272 181.60h1v2.07h-1zM273 180.77h1v2.07h-1zM274 179.95h1v2.07h-1zM275 178.18h1v3.01h-1zM276 176.18h1v3.24h-1zM277 174.18h1v3.24h-1zM278 172.14h1v3.28h-1zM279 170.10h1v3.28h-1zM280 169.08h1v2.26h-1zM281 169.08h1v1.24h-1zM282 169.08h1v1.24h-1zM283 169.08h1v2.42h-1zM284 170.26h1v3.20h-1zM285 172.22h1v3.00h-1zM286 172.55h1v2.54h-1zM287 171.38h1v2.41h-1zM288 171.38h1v1.24h-1zM289 171.38h1v1.24h-1zM290 171.38h1v1.24h-1zM291 171.38h1v1.24h-1zM292 171.38h1v1.24h-1zM293 171.38h1v1.24h-1zM294 171.38h1v1.24h-1zM295 171.38h1v3.22h-1zM296 173.36h1v1.46h-1zM297 173.58h1v1.24h-1zM298 171.38h1v3.44h-1zM299 171.38h1v1.24h-1zM300 171.38h1v1.24h-1zM301 171.38h1v1.24h-1zM302 171.38h1v1.24h-1zM303 171.38h1v1.24h-1zM304 171.38h1v1.24h-1zM305 171.38h1v1.24h-1zM306 171.38h1v1.24h-1zM307 171.38h1v1.24h-1zM308 171.38h1v1.84h-1zM309 171.98h1v4.24h-1zM310 174.98h1v14.39h-1zM311 188.13h1v18.74h-1zM312 205.63h1v18.74h-1zM313 223.13h1v18.16h-1zM314 240.05h1v16.80h-1zM315 255.60h1v16.80h-1zM316 271.16h1v16.80h-1zM317 286.71h1v16.80h-1zM318 302.27h1v16.80h-1zM319 317.82h1v7.81h-1zM320 324.39h1v7.63h-1zM321 330.79h1v8.45h-1zM322 338.00h1v8.23h-1zM323 344.99h1v8.09h-1zM324 351.84h1v6.79h-1zM325 357.39h1v5.92h-1zM326 362.07h1v5.82h-1zM327 366.65h1v4.91h-1zM328 370.31h1v4.91h-1zM329 373.98h1v2.34h-1zM330 375.08h1v1.24h-1zM331 375.08h1v1.24h-1zM332 374.64h1v1.68h-1zM333 372.43h1v3.45h-1zM334 370.78h1v2.89h-1zM335 370.78h1v1.24h-1zM336 370.00h1v2.02h-1zM337 368.18h1v3.06h-1zM338 368.18h1v1.24h-1zM339 368.18h1v1.24h-1zM340 368.18h1v1.24h-1zM341 368.18h1v1.24h-1zM342 368.18h1v2.31h-1zM343 369.25h1v2.57h-1zM344 370.58h1v1.58h-1zM345 370.92h1v4.64h-1zM346 374.32h1v4.30h-1zM347 377.38h1v1.24h-1zM348 376.23h1v2.39h-1zM349 375.08h1v2.39h-1zM350 375.08h1v1.24h-1zM351 375.08h1v1.24h-1zM352 372.00h1v4.32h-1zM353 367.60h1v5.64h-1zM354 357.85h1v10.99h-1zM355 345.04h1v14.05h-1zM356 331.08h1v15.20h-1zM357 315.81h1v16.51h-1zM358 297.93h1v19.11h-1zM359 280.06h1v19.11h-1zM360 262.19h1v19.11h-1zM361 244.32h1v19.11h-1zM362 230.85h1v14.71h-1zM363 221.78h1v10.31h-1zM364 214.17h1v8.85h-1zM365 207.20h1v8.21h-1zM366 202.79h1v5.65h-1zM367 198.38h1v5.65h-1zM368 197.08h1v2.54h-1zM369 195.77h1v2.54h-1zM370 194.47h1v2.54h-1zM371 194.08h1v1.63h-1zM372 194.08h1v1.24h-1zM373 194.08h1v1.24h-1zM374 194.08h1v1.93h-1zM375 194.77h1v2.96h-1zM376 196.49h1v2.96h-1zM377 198.21h1v4.92h-1zM378 201.89h1v5.14h-1zM379 205.79h1v3.43h-1zM380 207.98h1v3.24h-1zM381 209.98h1v3.24h-1zM382 211.98h1v2.04h-1zM383 212.78h1v2.04h-1zM384 213.58h1v1.38h-1zM385 213.72h1v1.38h-1zM386 213.86h1v1.51h-1zM387 214.13h1v2.72h-1zM388 215.61h1v2.72h-1zM389 217.09h1v2.43h-1zM390 218.28h1v1.24h-1zM391 218.28h1v1.24h-1zM392 218.28h1v1.24h-1zM393 218.28h1v1.24h-1zM394 218.28h1v1.24h-1zM395 217.77h1v1.75h-1zM396 216.05h1v2.95h-1zM397 215.88h1v1.48h-1zM398 216.12h1v1.50h-1zM399 216.38h1v2.84h-1zM400 217.98h1v2.84h-1zM401 219.49h1v2.13h-1zM402 217.71h1v3.02h-1zM403 215.94h1v3.02h-1zM404 214.16h1v3.02h-1zM405 213.98h1v2.66h-1zM406 215.40h1v2.82h-1zM407 216.98h1v2.82h-1zM408 218.57h1v2.82h-1zM409 220.15h1v1.87h-1zM410 220.78h1v1.24h-1zM411 218.44h1v3.58h-1zM412 215.09h1v4.58h-1zM413 211.75h1v4.58h-1zM414 209.35h1v3.64h-1zM415 207.18h1v3.41h-1zM416 202.28h1v6.14h-1zM417 200.02h1v3.50h-1zM418 197.77h1v3.50h-1zM419 195.51h1v3.50h-1zM420 193.01h1v3.74h-1zM421 188.28h1v5.96h-1zM422 183.56h1v5.96h-1zM423 179.46h1v5.34h-1zM424 177.83h1v2.87h-1zM425 176.20h1v2.87h-1zM426 175.45h1v2.00h-1zM427 174.90h1v1.78h-1zM428 174.36h1v1.78h-1zM429 173.96h1v1.64h-1zM430 173.89h1v1.31h-1zM431 173.82h1v1.31h-1zM432 173.75h1v1.31h-1zM433 173.68h1v1.31h-1zM434 173.61h1v1.31h-1zM435 172.45h1v2.40h-1zM436 170.20h1v3.49h-1zM437 169.08h1v2.37h-1zM438 169.08h1v1.24h-1zM439 169.08h1v3.54h-1zM440 171.38h1v1.24h-1zM441 171.38h1v1.24h-1zM442 169.08h1v3.54h-1zM443 169.08h1v1.24h-1zM444 169.08h1v1.24h-1zM445 169.08h1v1.40h-1zM446 169.24h1v2.88h-1zM447 170.89h1v1.73h-1zM448 171.38h1v1.24h-1zM449 171.38h1v3.44h-1zM450 171.38h1v2.89h-1zM451 171.38h1v1.24h-1zM452 171.38h1v1.24h-1zM453 171.38h1v1.24h-1zM454 171.38h1v3.22h-1zM455 173.36h1v1.46h-1zM456 173.58h1v1.24h-1zM457 173.58h1v1.24h-1zM458 173.58h1v1.24h-1zM459 173.58h1v1.24h-1zM460 173.58h1v1.24h-1zM461 173.58h1v1.24h-1zM462 173.58h1v3.45h-1zM463 175.79h1v6.50h-1zM464 181.06h1v14.01h-1zM465 193.83h1v15.53h-1zM466 208.11h1v16.28h-1zM467 223.15h1v17.78h-1zM468 239.69h1v22.78h-1zM469 261.23h1v22.78h-1zM470 282.76h1v22.78h-1zM471 304.30h1v18.16h-1zM472 321.23h1v7.40h-1zM473 327.39h1v6.82h-1zM474 332.97h1v5.96h-1zM475 337.69h1v5.96h-1zM476 342.42h1v6.20h-1zM477 347.38h1v6.44h-1zM478 352.58h1v6.44h-1zM479 357.78h1v5.13h-1zM480 361.67h1v3.82h-1zM481 364.25h1v3.26h-1zM482 366.27h1v2.88h-1zM483 367.91h1v2.88h-1zM484 369.55h1v2.47h-1zM485 370.78h1v1.24h-1zM486 370.78h1v1.24h-1zM487 370.78h1v1.24h-1zM488 369.91h1v2.11h-1zM489 368.18h1v2.97h-1zM490 368.18h1v1.24h-1zM491 368.18h1v1.24h-1zM492 368.18h1v1.24h-1zM493 368.18h1v1.24h-1zM494 368.18h1v1.24h-1zM495 368.18h1v1.24h-1zM496 368.18h1v1.24h-1zM497 368.18h1v1.24h-1zM498 368.18h1v3.64h-1zM499 370.58h1v1.24h-1zM500 370.58h1v1.24h-1zM501 370.58h1v1.48h-1zM502 370.82h1v3.67h-1zM503 373.25h1v3.42h-1zM504 375.43h1v1.24h-1zM505 375.43h1v1.24h-1zM506 369.33h1v7.34h-1zM507 360.41h1v10.16h-1zM508 349.98h1v11.67h-1zM509 336.98h1v14.24h-1zM510 320.29h1v17.93h-1zM511 301.84h1v19.69h-1zM512 283.38h1v19.70h-1zM513 264.92h1v19.70h-1zM514 246.46h1v19.70h-1zM515 231.01h1v16.69h-1zM516 220.07h1v12.18h-1zM517 212.80h1v8.51h-1zM518 206.45h1v7.59h-1zM519 200.93h1v6.76h-1zM520 196.23h1v5.94h-1zM521 193.88h1v3.59h-1zM522 193.88h1v1.24h-1zM523 191.48h1v3.64h-1zM524 191.48h1v1.24h-1zM525 191.48h1v1.24h-1zM526 191.48h1v2.87h-1zM527 193.11h1v3.96h-1zM528 195.84h1v3.96h-1zM529 198.56h1v3.62h-1zM530 200.94h1v3.47h-1zM531 203.17h1v3.47h-1zM532 205.40h1v3.47h-1zM533 207.63h1v3.15h-1zM534 209.54h1v3.07h-1zM535 211.37h1v3.07h-1zM536 213.20h1v3.33h-1zM537 215.28h1v3.35h-1zM538 217.40h1v3.35h-1zM539 219.51h1v2.51h-1zM540 220.78h1v1.24h-1zM541 220.78h1v1.24h-1zM542 220.78h1v1.24h-1zM543 220.78h1v1.24h-1zM544 220.60h1v1.42h-1zM545 218.82h1v3.03h-1zM546 218.28h1v1.78h-1zM547 217.95h1v1.57h-1zM548 216.30h1v2.89h-1zM549 214.64h1v2.89h-1zM550 213.98h1v2.38h-1zM551 215.12h1v2.00h-1zM552 215.88h1v1.75h-1zM553 216.39h1v2.95h-1zM554 218.11h1v1.41h-1zM555 218.28h1v1.24h-1zM556 216.91h1v2.61h-1zM557 215.88h1v2.27h-1zM558 216.53h1v2.86h-1zM559 218.15h1v2.86h-1zM560 219.77h1v2.86h-1zM561 221.40h1v2.86h-1zM562 221.64h1v2.78h-1zM563 218.84h1v4.04h-1zM564 214.96h1v5.12h-1zM565 211.08h1v5.12h-1zM566 208.41h1v3.91h-1zM567 205.75h1v3.91h-1zM568 203.08h1v3.91h-1zM569 201.02h1v3.30h-1zM570 199.22h1v3.04h-1zM571 197.42h1v3.04h-1zM572 195.32h1v3.34h-1zM573 191.99h1v4.56h-1zM574 188.67h1v4.56h-1zM575 185.34h1v4.56h-1zM576 183.67h1v2.91h-1zM577 182.42h1v2.50h-1zM578 181.16h1v2.50h-1zM579 179.91h1v2.50h-1zM580 178.21h1v2.94h-1zM581 176.46h1v2.99h-1zM582 174.70h1v2.99h-1zM583 172.95h1v2.99h-1zM584 171.38h1v2.81h-1zM585 171.38h1v1.46h-1zM586 171.60h1v3.22h-1zM587 173.58h1v1.24h-1zM588 173.58h1v1.24h-1zM589 173.58h1v1.24h-1zM590 173.36h1v1.46h-1zM591 172.26h1v2.34h-1zM592 171.00h1v2.50h-1zM593 169.12h1v3.12h-1zM594 167.24h1v3.12h-1zM595 166.68h1v1.80h-1zM596 166.68h1v1.85h-1zM597 167.29h1v3.28h-1zM598 169.34h1v3.28h-1zM599 171.38h1v3.28h-1zM600 173.43h1v3.28h-1zM601 175.47h1v1.65h-1zM602 174.75h1v2.37h-1zM603 172.50h1v3.49h-1zM604 171.38h1v2.37h-1zM605 171.38h1v1.40h-1zM606 171.54h1v2.88h-1zM607 173.18h1v2.88h-1zM608 174.82h1v1.90h-1zM609 174.65h1v1.76h-1zM610 174.14h1v1.76h-1zM611 173.98h1v1.77h-1zM612 174.51h1v1.99h-1zM613 175.26h1v1.46h-1zM614 175.48h1v1.24h-1zM615 175.48h1v6.54h-1zM616 180.78h1v9.74h-1zM617 189.28h1v12.96h-1zM618 201.00h1v17.52h-1zM619 217.27h1v15.17h-1zM620 231.20h1v16.95h-1zM621 246.91h1v17.71h-1zM622 263.38h1v17.71h-1zM623 279.85h1v17.71h-1zM624 296.32h1v17.71h-1zM625 312.79h1v11.40h-1zM626 322.95h1v7.20h-1zM627 328.91h1v7.02h-1zM628 334.69h1v6.62h-1zM629 340.07h1v6.62h-1zM630 345.45h1v6.87h-1zM631 351.08h1v7.24h-1zM632 357.08h1v7.24h-1zM633 363.08h1v7.47h-1zM634 369.31h1v6.33h-1zM635 374.40h1v4.22h-1zM636 377.38h1v1.24h-1zM637 374.16h1v4.46h-1zM638 370.58h1v4.82h-1zM639 368.18h1v3.64h-1zM640 368.18h1v1.24h-1zM641 368.18h1v1.24h-1zM642 368.18h1v3.61h-1zM643 370.55h1v3.37h-1zM644 372.68h1v1.24h-1zM645 372.68h1v1.24h-1zM646 372.68h1v1.24h-1zM647 372.68h1v1.24h-1zM648 372.68h1v1.24h-1zM649 371.16h1v2.76h-1zM650 370.78h1v1.62h-1zM651 370.78h1v1.24h-1zM652 370.78h1v1.24h-1zM653 370.78h1v3.31h-1zM654 372.24h1v2.08h-1zM655 371.68h1v2.21h-1zM656 372.65h1v3.67h-1zM657 375.08h1v1.24h-1zM658 375.08h1v1.24h-1zM659 371.32h1v5.00h-1zM660 362.61h1v9.95h-1zM661 351.02h1v12.83h-1zM662 335.22h1v17.04h-1zM663 317.76h1v18.70h-1zM664 301.61h1v17.39h-1zM665 285.46h1v17.39h-1zM666 269.30h1v17.39h-1zM667 253.15h1v17.39h-1zM668 237.00h1v17.39h-1zM669 225.54h1v12.70h-1zM670 215.42h1v11.36h-1zM671 207.21h1v9.45h-1zM672 200.52h1v7.93h-1zM673 196.12h1v5.64h-1zM674 192.94h1v4.42h-1zM675 191.60h1v2.58h-1zM676 190.25h1v2.58h-1zM677 189.39h1v2.10h-1zM678 189.02h1v1.62h-1zM679 188.98h1v2.90h-1zM680 190.64h1v3.08h-1zM681 192.48h1v5.74h-1zM682 196.98h1v5.74h-1zM683 201.48h1v5.25h-1zM684 205.49h1v4.93h-1zM685 209.18h1v4.93h-1zM686 212.87h1v3.66h-1zM687 215.29h1v3.11h-1zM688 217.17h1v2.55h-1zM689 218.48h1v1.24h-1zM690 218.48h1v1.24h-1zM691 217.90h1v1.82h-1zM692 215.02h1v4.12h-1zM693 213.58h1v2.68h-1zM694 213.58h1v1.24h-1zM695 213.58h1v1.84h-1zM696 214.18h1v3.24h-1zM697 216.18h1v1.44h-1zM698 216.38h1v1.24h-1zM699 216.38h1v1.24h-1zM700 216.38h1v1.24h-1zM701 216.38h1v1.24h-1zM702 215.38h1v2.24h-1zM703 213.58h1v3.04h-1zM704 213.58h1v1.24h-1zM705 213.58h1v1.24h-1zM706 213.58h1v1.24h-1zM707 213.58h1v1.24h-1zM708 213.58h1v1.59h-1zM709 213.93h1v3.01h-1zM710 215.70h1v1.42h-1zM711 215.88h1v1.80h-1zM712 216.44h1v3.10h-1zM713 218.29h1v1.43h-1zM714 218.48h1v1.24h-1zM715 217.78h1v1.94h-1zM716 216.03h1v2.99h-1zM717 214.71h1v2.56h-1zM718 214.05h1v1.91h-1zM719 211.06h1v4.22h-1zM720 207.82h1v4.48h-1zM721 204.58h1v4.48h-1zM722 202.30h1v3.52h-1zM723 200.67h1v2.87h-1zM724 199.03h1v2.87h-1zM725 197.18h1v3.09h-1zM726 195.18h1v3.24h-1zM727 193.18h1v3.24h-1zM728 191.18h1v3.24h-1zM729 185.53h1v6.89h-1zM730 178.32h1v8.45h-1zM731 174.68h1v4.88h-1zM732 171.93h1v3.99h-1zM733 171.38h1v2.50h-1zM734 172.64h1v2.18h-1zM735 172.68h1v1.88h-1zM736 172.04h1v1.88h-1zM737 169.22h1v4.06h-1zM738 167.08h1v3.38h-1zM739 167.08h1v1.24h-1zM740 167.08h1v1.24h-1zM741 167.08h1v1.24h-1zM742 167.08h1v3.54h-1zM743 169.38h1v1.24h-1zM744 169.38h1v1.95h-1zM745 170.09h1v2.53h-1zM746 171.38h1v1.24h-1zM747 171.38h1v1.24h-1zM748 170.39h1v2.23h-1zM749 169.08h1v2.55h-1zM750 169.08h1v1.24h-1zM751 169.08h1v1.24h-1zM752 169.08h1v1.24h-1zM753 169.08h1v1.24h-1zM754 169.08h1v2.90h-1zM755 170.74h1v3.61h-1zM756 173.11h1v1.71h-1zM757 173.58h1v1.24h-1zM758 173.58h1v1.24h-1zM759 171.62h1v3.20h-1zM760 171.25h1v1.61h-1zM761 171.11h1v1.38h-1zM762 170.81h1v1.54h-1zM763 169.08h1v2.97h-1zM764 169.08h1v3.31h-1zM765 171.15h1v2.67h-1zM766 172.58h1v2.24h-1zM767 173.58h1v3.79h-1zM768 176.13h1v4.82h-1zM769 179.71h1v7.07h-1zM770 185.54h1v8.04h-1zM771 192.34h1v15.60h-1zM772 206.70h1v17.44h-1zM773 222.90h1v18.03h-1zM774 239.69h1v22.78h-1zM775 261.23h1v22.78h-1zM776 282.76h1v22.78h-1zM777 304.30h1v18.03h-1zM778 321.09h1v6.95h-1zM779 326.80h1v6.95h-1zM780 332.51h1v5.44h-1zM781 336.71h1v5.27h-1zM782 340.75h1v5.27h-1zM783 344.78h1v5.96h-1zM784 349.50h1v5.96h-1zM785 354.23h1v5.95h-1zM786 358.93h1v5.77h-1zM787 363.47h1v5.77h-1zM788 368.00h1v5.67h-1zM789 372.43h1v4.77h-1zM790 375.97h1v2.65h-1zM791 374.18h1v3.24h-1zM792 372.27h1v3.15h-1zM793 370.65h1v2.86h-1zM794 369.03h1v2.86h-1zM795 367.41h1v2.86h-1zM796 366.28h1v2.37h-1zM797 366.28h1v1.24h-1zM798 366.28h1v1.24h-1zM799 366.28h1v1.24h-1zM800 366.28h1v3.20h-1zM801 368.24h1v3.20h-1zM802 370.19h1v3.20h-1zM803 372.15h1v3.20h-1zM804 374.10h1v2.22h-1zM805 375.08h1v1.24h-1zM806 375.08h1v1.24h-1zM807 375.08h1v1.24h-1zM808 375.08h1v1.24h-1zM809 375.08h1v1.24h-1zM810 375.08h1v1.24h-1zM811 374.59h1v1.73h-1zM812 369.66h1v6.17h-1zM813 362.72h1v8.18h-1zM814 352.08h1v11.88h-1zM815 333.31h1v20.01h-1zM816 319.38h1v15.17h-1zM817 303.38h1v17.24h-1zM818 287.38h1v17.24h-1zM819 271.38h1v17.24h-1zM820 255.38h1v17.24h-1zM821 239.38h1v17.24h-1zM822 226.91h1v13.71h-1zM823 216.34h1v11.81h-1zM824 208.63h1v8.95h-1zM825 200.92h1v8.95h-1zM826 197.06h1v5.10h-1zM827 194.17h1v4.13h-1zM828 191.40h1v4.00h-1zM829 190.58h1v3.78h-1zM830 193.12h1v1.79h-1zM831 193.67h1v1.45h-1zM832 193.88h1v3.64h-1zM833 196.28h1v3.64h-1zM834 198.68h1v3.64h-1zM835 201.08h1v3.31h-1zM836 203.15h1v2.98h-1zM837 204.90h1v2.98h-1zM838 206.64h1v2.98h-1zM839 208.38h1v3.06h-1zM840 210.21h1v3.12h-1zM841 212.08h1v2.74h-1zM842 213.58h1v1.24h-1zM843 213.58h1v1.24h-1zM844 213.58h1v1.24h-1zM845 213.58h1v1.24h-1zM846 213.58h1v1.24h-1zM847 213.58h1v1.80h-1zM848 214.14h1v3.48h-1zM849 216.38h1v1.24h-1zM850 216.38h1v1.24h-1zM851 216.38h1v1.24h-1zM852 216.38h1v1.87h-1zM853 217.01h1v2.71h-1zM854 218.48h1v1.24h-1zM855 218.48h1v1.24h-1zM856 218.48h1v1.24h-1zM857 216.03h1v3.69h-1zM858 213.58h1v3.69h-1zM859 213.58h1v1.24h-1zM860 213.58h1v1.53h-1zM861 213.87h1v4.18h-1zM862 216.81h1v2.71h-1zM863 218.28h1v1.24h-1zM864 218.28h1v1.24h-1zM865 218.28h1v1.24h-1zM866 218.28h1v1.24h-1zM867 218.28h1v1.62h-1zM868 218.66h1v3.16h-1zM869 217.73h1v4.29h-1zM870 214.35h1v4.62h-1zM871 210.75h1v4.84h-1zM872 206.64h1v5.35h-1zM873 203.48h1v4.40h-1zM874 201.74h1v2.98h-1zM875 200.00h1v2.98h-1zM876 198.25h1v2.98h-1zM877 195.80h1v3.69h-1zM878 192.65h1v4.39h-1zM879 189.50h1v4.39h-1zM880 186.34h1v4.39h-1zM881 184.84h1v2.74h-1zM882 184.44h1v1.64h-1zM883 182.85h1v2.83h-1zM884 180.48h1v3.62h-1zM885 178.10h1v3.62h-1zM886 175.72h1v3.62h-1zM887 173.58h1v3.38h-1zM888 173.58h1v1.24h-1zM889 173.58h1v1.24h-1zM890 173.58h1v1.24h-1zM891 173.58h1v1.24h-1zM892 173.58h1v1.24h-1zM893 173.58h1v1.24h-1zM894 173.58h1v1.24h-1zM895 171.05h1v3.77h-1zM896 169.08h1v3.21h-1zM897 169.08h1v1.24h-1zM898 169.08h1v1.24h-1zM899 169.08h1v2.80h-1zM900 170.64h1v2.80h-1zM901 172.20h1v2.80h-1zM902 173.76h1v2.80h-1zM903 175.32h1v2.80h-1zM904 176.88h1v2.64h-1zM905 176.19h1v3.14h-1zM906 174.30h1v3.14h-1zM907 172.40h1v3.14h-1zM908 170.50h1v3.14h-1zM909 169.08h1v2.66h-1zM910 169.08h1v1.69h-1zM911 169.53h1v2.74h-1zM912 171.03h1v2.74h-1zM913 172.53h1v2.29h-1zM914 173.58h1v1.24h-1zM915 173.58h1v1.24h-1zM916 173.58h1v1.24h-1zM917 172.60h1v2.22h-1zM918 171.38h1v2.46h-1zM919 170.03h1v2.59h-1zM920 168.68h1v2.59h-1zM921 169.55h1v2.98h-1zM922 171.29h1v6.61h-1zM923 176.66h1v10.84h-1zM924 186.26h1v16.06h-1zM925 201.08h1v20.84h-1zM926 220.68h1v21.08h-1zM927 240.52h1v18.38h-1zM928 257.67h1v18.38h-1zM929 274.81h1v18.38h-1zM930 291.95h1v18.38h-1zM931 309.09h1v13.98h-1zM932 321.83h1v7.36h-1zM933 327.95h1v6.77h-1zM934 333.48h1v6.62h-1zM935 338.86h1v6.62h-1zM936 344.24h1v6.62h-1zM937 349.62h1v6.62h-1zM938 355.00h1v6.62h-1zM939 360.38h1v4.19h-1zM940 363.33h1v4.19h-1zM941 366.28h1v2.50h-1zM942 367.54h1v2.50h-1zM943 368.80h1v2.56h-1zM944 370.12h1v2.59h-1zM945 371.47h1v2.45h-1zM946 372.68h1v1.24h-1zM947 372.68h1v1.24h-1zM948 371.55h1v2.37h-1zM949 369.68h1v3.12h-1zM950 368.18h1v2.74h-1zM951 368.18h1v1.24h-1zM952 368.18h1v1.24h-1zM953 368.18h1v2.41h-1zM954 369.35h1v2.91h-1zM955 371.01h1v3.33h-1zM956 373.10h1v3.38h-1zM957 375.24h1v3.38h-1zM958 377.38h1v1.24h-1zM959 375.75h1v2.87h-1zM960 373.70h1v3.28h-1zM961 372.68h1v2.26h-1zM962 372.68h1v1.46h-1zM963 372.90h1v3.48h-1zM964 375.14h1v3.48h-1zM965 374.31h1v4.31h-1zM966 369.00h1v6.55h-1zM967 354.55h1v15.69h-1zM968 338.93h1v16.86h-1zM969 326.24h1v13.93h-1zM970 314.44h1v13.04h-1zM971 297.97h1v17.71h-1zM972 281.50h1v17.71h-1zM973 265.03h1v17.71h-1zM974 248.56h1v17.71h-1zM975 233.00h1v16.80h-1zM976 221.07h1v13.16h-1zM977 212.41h1v9.90h-1zM978 204.11h1v9.54h-1zM979 199.90h1v5.45h-1zM980 196.14h1v5.00h-1zM981 193.88h1v3.50h-1zM982 193.88h1v1.24h-1zM983 193.88h1v1.24h-1zM984 193.88h1v1.45h-1zM985 194.09h1v3.13h-1zM986 195.98h1v1.24h-1zM987 195.98h1v1.24h-1zM988 195.98h1v1.24h-1zM989 195.98h1v6.21h-1zM990 200.95h1v5.38h-1zM991 205.10h1v4.76h-1zM992 208.61h1v4.11h-1zM993 211.49h1v1.53h-1zM994 211.78h1v1.92h-1zM995 212.46h1v2.42h-1zM996 213.64h1v1.45h-1zM997 213.85h1v2.05h-1zM998 214.67h1v2.95h-1zM999 216.38h1v1.24h-1zM1000 216.38h1v2.08h-1zM1001 217.22h1v2.50h-1zM1002 218.48h1v1.24h-1zM1003 215.88h1v3.84h-1zM1004 215.88h1v1.24h-1zM1005 215.88h1v1.24h-1zM1006 215.88h1v1.24h-1zM1007 215.88h1v1.24h-1zM1008 215.88h1v2.93h-1zM1009 217.57h1v2.93h-1zM1010 219.26h1v2.76h-1zM1011 220.78h1v1.24h-1zM1012 220.78h1v1.24h-1zM1013 220.28h1v1.74h-1zM1014 218.61h1v2.91h-1zM1015 218.28h1v1.57h-1z" fill="#e6e600" shape-rendering="geometricPrecision"/><g shape-rendering="geometricPrecision"><path d="M201 36H211.5L206.2 46Z" fill="#ffa500"/>
<path d="M45.7 380.5L51.8 391.8H39.8Z" fill="#ffa500"/>
<path d="M995.5 288L1004.2 283V293Z" fill="#f4f400"/><rect x="1004" y="287.2" width="15" height="1.5" fill="#f4f400"/>
<rect x="18" y="315" width="6" height="2" fill="#f4f400"/><path d="M23 311L30.5 316L23 321Z" fill="#f4f400"/>
<circle cx="10.5" cy="316" r="8.9" fill="#ffff00" stroke="#ffa500" stroke-width="1.8"/>
<text x="10.4" y="320.3" font-family="Liberation Sans, Arial, sans-serif" font-size="12" text-anchor="middle" fill="#1c1c00">1</text></g></svg>
<div id="panel"></div>

<div class="box" id="chbox" style="left:21px;top:604px;width:281px;height:24px">
 <span class="pill" style="left:7.4px;top:6px">C1</span>
 <span class="b" style="left:45.2px;top:5.2px">200.0mV/div</span>
 <span class="b" style="left:160.5px;top:5.2px">50&#937;</span>
 <span class="b" style="left:193.2px;top:2.6px;font-size:10.3px;font-weight:normal;letter-spacing:0">B</span>
 <span class="b" style="left:200.8px;top:.9px;font-size:9px;font-weight:normal">&#8242;</span>
 <span class="b" style="left:198.9px;top:8.9px;font-size:10.8px;font-weight:normal;-webkit-text-stroke:.15px #fff;letter-spacing:0">W</span>
 <span class="b" style="left:208.8px;top:5.2px">:1.0G</span>
</div>

<div class="box" id="measbox" style="left:21px;top:633px;width:566px;height:106px">
<div class="th" style="left:106px;width:71px">Value</div>
<div class="th" style="left:176px;width:81px">Mean</div>
<div class="th" style="left:256px;width:71px">Min</div>
<div class="th" style="left:326px;width:71px">Max</div>
<div class="th" style="left:396px;width:71px">St Dev</div>
<div class="th" style="left:466px;width:61px">Count</div>
<div class="th" style="left:526px;width:37px">Info</div>
<span class="pill" style="left:7.4px;top:26.5px">C1</span>
<div class="rl" style="left:47.4px;top:26px">High</div>
<div class="td" style="left:106px;top:26px;width:69px">511.5mV</div>
<div class="td g" style="left:176px;top:26px;width:79px">511.50001m</div>
<div class="td" style="left:256px;top:26px;width:69px">511.5m</div>
<div class="td g" style="left:326px;top:26px;width:69px">511.5m</div>
<div class="td" style="left:396px;top:26px;width:69px">0.0</div>
<div class="td" style="left:466px;top:26px;width:59px">1.0</div>
<div class="td" style="left:526px;top:26px;width:35px"></div>
<span class="pill" style="left:7.4px;top:45.5px">C1</span>
<div class="rl" style="left:47.4px;top:45px">Low</div>
<div class="td" style="left:106px;top:45px;width:69px">-200.5mV</div>
<div class="td g" style="left:176px;top:45px;width:79px">-200.5m</div>
<div class="td" style="left:256px;top:45px;width:69px">-200.5m</div>
<div class="td g" style="left:326px;top:45px;width:69px">-200.5m</div>
<div class="td" style="left:396px;top:45px;width:69px">0.0</div>
<div class="td" style="left:466px;top:45px;width:59px">1.0</div>
<div class="td" style="left:526px;top:45px;width:35px"></div>
<span class="pill" style="left:7.4px;top:64.5px">C1</span>
<div class="rl" style="left:47.4px;top:64px">Max</div>
<div class="td" style="left:106px;top:64px;width:69px">529.0mV</div>
<div class="td g" style="left:176px;top:64px;width:79px">528.96876m</div>
<div class="td" style="left:256px;top:64px;width:69px">529.0m</div>
<div class="td g" style="left:326px;top:64px;width:69px">529.0m</div>
<div class="td" style="left:396px;top:64px;width:69px">0.0</div>
<div class="td" style="left:466px;top:64px;width:59px">1.0</div>
<div class="td" style="left:526px;top:64px;width:35px"></div>
<span class="pill" style="left:7.4px;top:83.5px">C1</span>
<div class="rl" style="left:47.4px;top:83px">Min*</div>
<div class="td" style="left:106px;top:83px;width:69px">-232.8mV</div>
<div class="td g" style="left:176px;top:83px;width:79px">-232.84375m</div>
<div class="td" style="left:256px;top:83px;width:69px">-232.8m</div>
<div class="td g" style="left:326px;top:83px;width:69px">-232.8m</div>
<div class="td" style="left:396px;top:83px;width:69px">0.0</div>
<div class="td" style="left:466px;top:83px;width:59px">1.0</div>
<div class="td" style="left:526px;top:83px;width:35px"></div>
<i class="ln" style="left:105px;top:25px;width:1px;height:77px"></i><i class="ln" style="left:175px;top:25px;width:1px;height:77px"></i><i class="ln" style="left:255px;top:25px;width:1px;height:77px"></i><i class="ln" style="left:325px;top:25px;width:1px;height:77px"></i><i class="ln" style="left:395px;top:25px;width:1px;height:77px"></i><i class="ln" style="left:465px;top:25px;width:1px;height:77px"></i><i class="ln" style="left:525px;top:25px;width:1px;height:77px"></i><i class="ln" style="left:561px;top:25px;width:1px;height:77px"></i>
<i class="ln" style="left:105px;top:25px;width:457px;height:1px"></i><i class="ln" style="left:105px;top:44px;width:457px;height:1px"></i><i class="ln" style="left:105px;top:63px;width:457px;height:1px"></i><i class="ln" style="left:105px;top:82px;width:457px;height:1px"></i><i class="ln" style="left:105px;top:101px;width:457px;height:1px"></i>
</div>

<div class="box" id="trigbox" style="left:591px;top:604px;width:187px;height:26px">
 <span style="position:absolute;left:5px;top:6px;width:16px;height:15px;box-sizing:border-box;border:1px solid #ff9a1a;background:#d6d6d6;color:#000;font-weight:bold;font-size:10px;line-height:11px;text-align:center">A'</span>
 <span class="pill" style="left:23px;top:6.6px">C1</span>
 <svg style="position:absolute;left:58px;top:6px" width="18" height="15" viewBox="0 0 18 15"><path d="M1.5 12.8H5.6L10 1.4H14.6" fill="none" stroke="#fff" stroke-width="1.5"/></svg>
 <span class="b" style="left:75.8px;top:5.2px">100.0mV</span>
</div>

<div class="box" id="infobox" style="left:781px;top:604px;width:231px;height:93px">
 <span class="b" style="left:7px;top:5.4px">10.0ns/div</span>
 <span class="b" style="left:71.3px;top:5.4px">20.0GS/s</span>
 <span class="b" style="left:131.2px;top:5.4px">IT</span>
 <span class="b" style="left:157.2px;top:5.4px">25.0ps/pt</span>
 <span class="b" style="left:7px;top:25.8px;color:#f21616">Stopped</span>
 <span class="b" style="left:95.6px;top:25.8px">Single Seq</span>
 <span class="b" style="left:7px;top:46.9px">1 acqs</span>
 <span class="b" style="left:146.5px;top:46.9px">RL:4.0k</span>
 <span class="b" style="left:7px;top:68.4px">Auto</span>
 <span class="b" style="left:48.8px;top:68.4px">October 17, 2018</span>
 <span class="b" style="left:174.6px;top:68.4px;color:#f39a12">16:45:25</span>
</div>
</body>
</html>
